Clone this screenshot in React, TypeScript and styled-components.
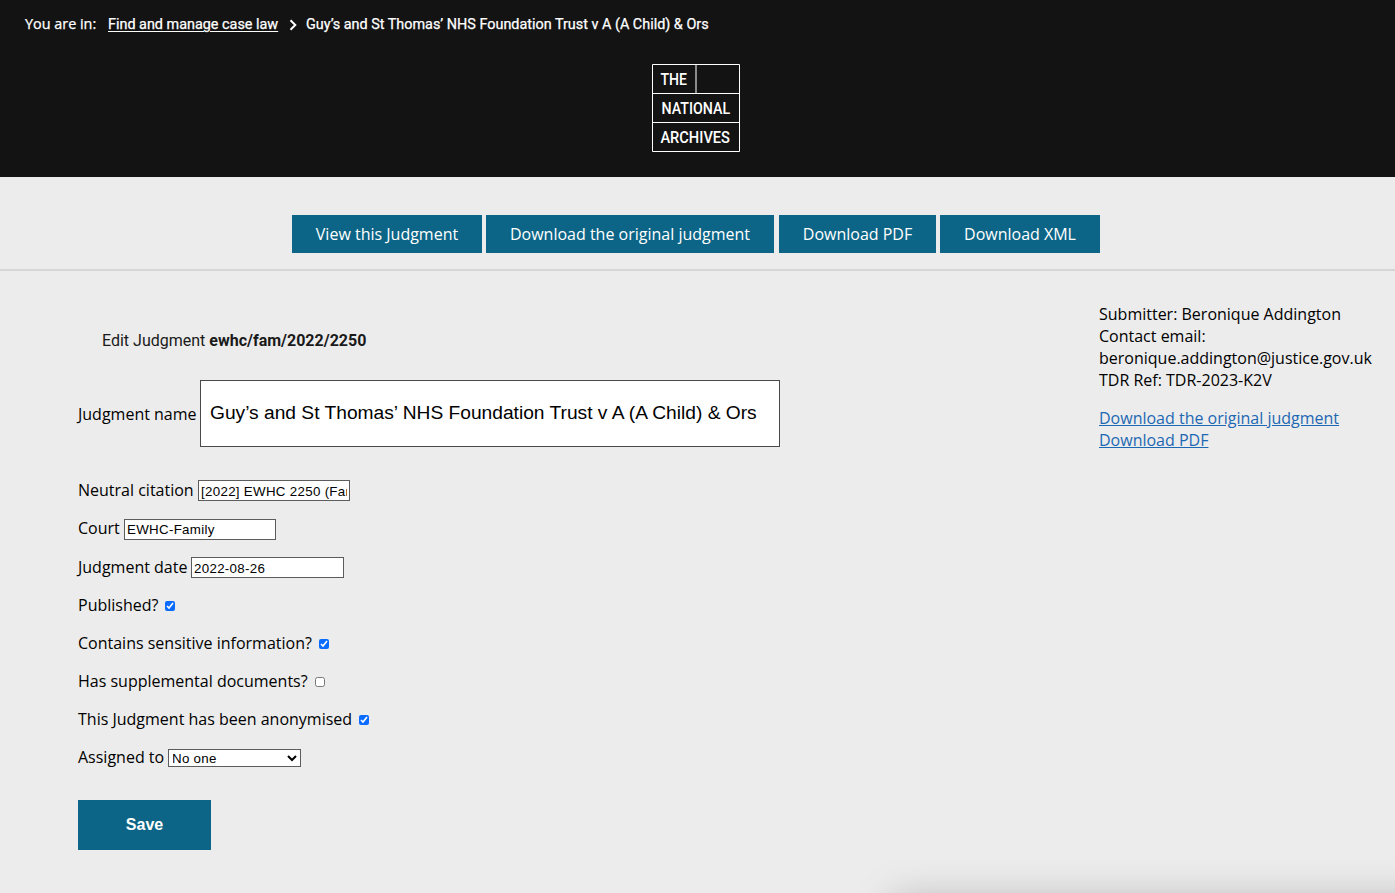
import React from "react";
import styled, { createGlobalStyle } from "styled-components";

const teal = "#0c6586";

const GlobalStyle = createGlobalStyle`
  * { box-sizing: border-box; }
  body {
    margin: 0;
    background: #ececec;
    color: #000;
    font: 16px/22px "Open Sans", "Noto Sans", sans-serif;
  }
`;

const Page = styled.div`
  position: relative;
  height: 893px;
  overflow: hidden;
`;

const Header = styled.header`
  height: 177px;
  background: #131313;
  color: #fff;
  display: flex;
  flex-direction: column;
`;

const Breadcrumbs = styled.nav`
  display: flex;
  align-items: center;
  height: 48px;
  padding-left: 25px;
  font: 400 14.4px/20px Roboto, sans-serif;
  -webkit-text-stroke: 0.25px #fff;
  white-space: nowrap;
`;

const Lead = styled.span`
  width: 83px;
  font-family: "Open Sans", "Noto Sans", sans-serif;
`;

const Crumb = styled.span`
  padding-top: 2px;
`;

const HomeLink = styled.a`
  width: 170px;
  padding-top: 2px;
  color: inherit;
  text-decoration: underline;
  text-underline-offset: 2px;
  text-decoration-thickness: 1px;
`;

const Chevron = styled.svg`
  width: 8px;
  height: 12px;
  margin: 2px 9px 0 11px;
`;

const Logo = styled.svg`
  width: 88px;
  height: 88px;
  margin: 16px 0 0 652px;
`;

const Toolbar = styled.div`
  display: flex;
  height: 94px;
  padding: 38px 0 0 292px;
  border-bottom: 2px solid #d6d6d6;
`;

const ToolbarLink = styled.a<{ $width: number; $gap?: number }>`
  width: ${(p) => p.$width}px;
  height: 38px;
  margin-right: ${(p) => p.$gap ?? 4}px;
  background: ${teal};
  color: #fff;
  line-height: 38px;
  text-align: center;
  white-space: nowrap;
`;

const Content = styled.main`
  display: flex;
  justify-content: space-between;
  padding: 32px 0 0 78px;
`;

const Form = styled.form`
  width: 720px;
`;

const Title = styled.h1`
  margin: 26px 0 0 24px;
  color: #1a1a1a;
  font: 400 16px/24px Roboto, sans-serif;
`;

const NameRow = styled.label`
  display: flex;
  align-items: center;
  height: 67px;
  margin-top: 27px;
`;

const LabelText = styled.span<{ $width: number }>`
  flex: none;
  width: ${(p) => p.$width}px;
  white-space: nowrap;
`;

const NameInput = styled.input`
  width: 580px;
  height: 67px;
  padding: 0 9px 2px;
  border: 1px solid #4a4a4a;
  border-radius: 0;
  background: #fff;
  color: #000;
  font: 19.2px "Liberation Sans", Arial, sans-serif;
`;

const Fields = styled.div`
  display: grid;
  grid-template-rows: 38px 39px repeat(6, 38px);
  margin-top: 24px;
`;

const Row = styled.label`
  display: flex;
  align-items: flex-start;
  padding-top: 8px;
`;

const TextInput = styled.input<{ $width?: number; $drop?: number }>`
  width: ${(p) => p.$width ?? 152}px;
  height: 21px;
  margin-top: ${(p) => p.$drop ?? 1}px;
  padding: ${(p) => (p.$drop ? "0 1px 1px 2px" : "1px 2px 0 2px")};
  border: 1px solid #5c5c5c;
  border-radius: 0;
  background: #fff;
  color: #000;
  font: 13.33px "Liberation Sans", Arial, sans-serif;
  letter-spacing: 0.3px;
`;

const Checkbox = styled.input`
  width: 10px;
  height: 10px;
  margin: 7px 0 0;
  accent-color: #0a6cff;
`;

const Select = styled.select`
  width: 133px;
  height: 18px;
  margin-top: 3px;
  padding: 0;
  border: 1px solid #5c5c5c;
  border-radius: 0;
  background-color: #fff;
  color: #000;
  font: 13.33px "Liberation Sans", Arial, sans-serif;
  letter-spacing: 0.28px;
  text-indent: -1px;
`;

const SaveButton = styled.button`
  display: block;
  width: 133px;
  height: 50px;
  margin-top: 24px;
  padding: 0;
  border: 0;
  background: ${teal};
  color: #fff;
  font: bold 16px "Liberation Sans", Arial, sans-serif;
`;

const Sidebar = styled.aside`
  width: 296px;
`;

const Details = styled.p`
  margin: 0 0 16px;
`;

const DownloadLink = styled.a`
  display: block;
  color: #1d68b3;
  text-decoration: underline;
`;

const WindowShadow = styled.div`
  position: absolute;
  left: 893px;
  top: 901px;
  width: 600px;
  height: 120px;
  box-shadow: 0 0 38px rgba(0, 0, 0, 0.26);
`;

const judgmentName = "Guy’s and St Thomas’ NHS Foundation Trust v A (A Child) & Ors";

const checks = [
  { label: "Published?", width: 87, checked: true },
  { label: "Contains sensitive information?", width: 241, checked: true },
  { label: "Has supplemental documents?", width: 237, checked: false },
  { label: "This Judgment has been anonymised", width: 281, checked: true },
];

export default function App() {
  return (
    <Page>
      <GlobalStyle />
      <Header>
        <Breadcrumbs>
          <Lead>You are in:</Lead>
          <HomeLink>Find and manage case law</HomeLink>
          <Chevron viewBox="0 0 8 12" fill="none" stroke="#fff" strokeWidth="2">
            <path d="M1.5 1.2 6.3 6 1.5 10.8" />
          </Chevron>
          <Crumb>{judgmentName}</Crumb>
        </Breadcrumbs>
        <Logo viewBox="0 0 88 88" role="img" aria-label="The National Archives">
          <g fill="none" stroke="#fff">
            <path d="M.5.5h87v87H.5zM0 29.5h88M0 58.5h88" />
            <path d="M44 1v28" stroke="#8b8b8b" strokeWidth="2" />
          </g>
          <g fill="#fff" fontFamily="Roboto, sans-serif" fontSize="16.5" fontWeight="500">
            <text x="8.5" y="21" textLength="26.5" lengthAdjust="spacingAndGlyphs">THE</text>
            <text x="9.6" y="50" textLength="68.6" lengthAdjust="spacingAndGlyphs">NATIONAL</text>
            <text x="8.4" y="79" textLength="69.6" lengthAdjust="spacingAndGlyphs">ARCHIVES</text>
          </g>
        </Logo>
      </Header>
      <Toolbar>
        <ToolbarLink $width={190}>View this Judgment</ToolbarLink>
        <ToolbarLink $width={288} $gap={5}>Download the original judgment</ToolbarLink>
        <ToolbarLink $width={157}>Download PDF</ToolbarLink>
        <ToolbarLink $width={160}>Download XML</ToolbarLink>
      </Toolbar>
      <Content>
        <Form>
          <Title>Edit Judgment <b>ewhc/fam/2022/2250</b></Title>
          <NameRow>
            <LabelText $width={122}>Judgment name</LabelText>
            <NameInput defaultValue={judgmentName} />
          </NameRow>
          <Fields>
            <Row>
              <LabelText $width={120}>Neutral citation</LabelText>
              <TextInput defaultValue="[2022] EWHC 2250 (Fam)" />
            </Row>
            <Row>
              <LabelText $width={46}>Court</LabelText>
              <TextInput $drop={2} defaultValue="EWHC-Family" />
            </Row>
            <Row>
              <LabelText $width={113}>Judgment date</LabelText>
              <TextInput $width={153} defaultValue="2022-08-26" />
            </Row>
            {checks.map((c) => (
              <Row key={c.label}>
                <LabelText $width={c.width}>{c.label}</LabelText>
                <Checkbox type="checkbox" defaultChecked={c.checked} />
              </Row>
            ))}
            <Row>
              <LabelText $width={90}>Assigned to</LabelText>
              <Select>
                <option>No one</option>
              </Select>
            </Row>
          </Fields>
          <SaveButton type="button">Save</SaveButton>
        </Form>
        <Sidebar>
          <Details>
            Submitter: Beronique Addington<br />
            Contact email:<br />
            beronique.addington@justice.gov.uk<br />
            TDR Ref: TDR-2023-K2V
          </Details>
          <DownloadLink>Download the original judgment</DownloadLink>
          <DownloadLink>Download PDF</DownloadLink>
        </Sidebar>
      </Content>
      <WindowShadow />
    </Page>
  );
}
